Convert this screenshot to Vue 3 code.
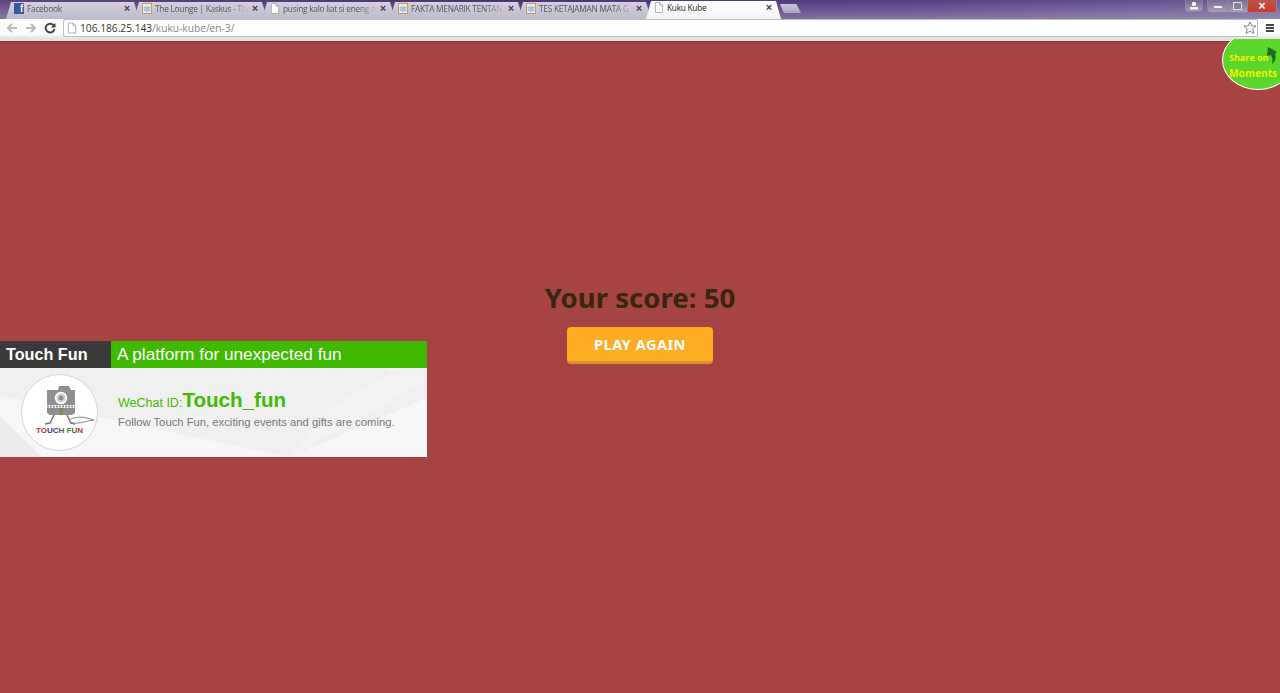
<script setup>
const tabs = [
  { title: "Facebook", icon: "fb" },
  { title: "The Lounge | Kaskus - The", icon: "web" },
  { title: "pusing kalo liat si eneng n", icon: "doc" },
  { title: "FAKTA MENARIK TENTAN", icon: "web" },
  { title: "TES KETAJAMAN MATA G", icon: "web" },
  { title: "Kuku Kube", icon: "doc", active: true },
];
</script>

<template>
  <div class="window">
    <!-- tab strip -->
    <div class="tabstrip">
      <div
        v-for="tab in tabs"
        :key="tab.title"
        :class="['tab', { active: tab.active }]"
      >
        <span v-if="tab.icon === 'fb'" class="favicon fb">f</span>
        <span v-else-if="tab.icon === 'web'" class="favicon web">
          <svg width="10" height="10" viewBox="0 0 10 10">
            <path d="M1 3h3M6 3h3M1 5h8M1 7h3M6 7h3M5 1v8" stroke="#7b9cc4" stroke-width="1" fill="none" />
          </svg>
        </span>
        <svg v-else class="favicon" width="11" height="12" viewBox="0 0 11 12">
          <path d="M1.5.5h5l3 3v8h-8z" fill="#fff" stroke="#a9a9b0" />
          <path d="M6.5.5v3h3" fill="none" stroke="#a9a9b0" />
        </svg>
        <span class="tab-title">{{ tab.title }}</span>
        <span class="tab-close">×</span>
      </div>
      <div class="new-tab"></div>
      <div class="window-controls">
        <div class="user-btn">
          <svg width="10" height="9" viewBox="0 0 10 9">
            <circle cx="5" cy="3" r="2.2" fill="#f4f4f6" />
            <rect x="1" y="6" width="8" height="2.4" fill="#f4f4f6" />
          </svg>
        </div>
        <div class="caption">
          <div class="cap-btn"><span class="min-bar"></span></div>
          <div class="cap-btn"><span class="max-box"></span></div>
          <div class="cap-btn close">×</div>
        </div>
      </div>
    </div>

    <!-- toolbar -->
    <div class="toolbar">
      <div class="nav">
        <svg width="12" height="10" viewBox="0 0 12 10">
          <path d="M11 5H3M6 1 2 5l4 4" fill="none" stroke="#b9b9b9" stroke-width="2" />
        </svg>
        <svg width="12" height="10" viewBox="0 0 12 10">
          <path d="M1 5h8M6 1l4 4-4 4" fill="none" stroke="#b9b9b9" stroke-width="2" />
        </svg>
        <svg width="12" height="12" viewBox="0 0 12 12">
          <path d="M10 4a4.4 4.4 0 1 0 .4 3" fill="none" stroke="#444" stroke-width="2" />
          <path d="M11.5 1v4.5H7z" fill="#444" />
        </svg>
      </div>
      <div class="omnibox">
        <svg width="10" height="12" viewBox="0 0 11 12">
          <path d="M1.5.5h5l3 3v8h-8z" fill="#fff" stroke="#a9a9b0" />
          <path d="M6.5.5v3h3" fill="none" stroke="#a9a9b0" />
        </svg>
        <span class="url"><b>106.186.25.143</b>/kuku-kube/en-3/</span>
        <svg class="star" width="14" height="14" viewBox="0 0 14 14">
          <path d="M7 1l1.800 4h4.200l-3.300 2.900 1.100 4.600L7 10.100 3.200 12.500l1.100-4.600L1 5h4.200z" fill="#fff" stroke="#888" />
        </svg>
      </div>
      <div class="menu"><span></span><span></span><span></span></div>
    </div>

    <!-- page -->
    <div class="page">
      <div class="banner">
        <div class="banner-head">
          <div class="brand">Touch Fun</div>
          <div class="slogan">A platform for unexpected fun</div>
        </div>
        <div class="banner-body">
          <svg class="banner-bg" width="427" height="89" viewBox="0 0 427 89">
            <polygon points="0,0 110,0 380,0 427,8 427,30 290,89 150,60 0,28" fill="#f0f0f0" />
            <polygon points="330,40 400,0 427,0 427,12 290,89" fill="#f3f3f3" />
            <polygon points="0,48 42,89 0,89" fill="#ededed" />
          </svg>
          <div class="logo">
            <svg width="72" height="41" viewBox="0 0 72 41">
              <path d="M23 5h11l1-4h10l2 4h4v15H23z" fill="#8f8f8f" />
              <circle cx="37" cy="13" r="5.500" fill="#d4d4d4" stroke="#fff" stroke-width="1.500" />
              <circle cx="37" cy="13" r="2.500" fill="#8f8f8f" />
              <path d="M23 21.500h28" stroke="#8f8f8f" stroke-width="2" stroke-dasharray="2 1" />
              <path d="M23 23h28v5l-3 2H26l-3-2z" fill="#8f8f8f" />
              <rect x="36" y="23" width="1.500" height="7" fill="#c8503c" />
              <rect x="37.500" y="23" width="1.500" height="7" fill="#58a83c" />
              <path d="M30 30l-4 8-5 1M43 30l4 8 4 1" fill="none" stroke="#777" stroke-width="1.500" />
              <path d="M47 34c7-3 13-2 23 1-8 1-15 4-21 3-3-1-4-3-2-4z" fill="#fff" stroke="#888" />
            </svg>
            <div class="logo-name">
              <span style="color: #b5353a">TO</span><span style="color: #3a3a80">UC</span><span style="color: #555">H </span><span style="color: #3c9a3c">F</span><span style="color: #555">U</span><span style="color: #b5353a">N</span>
            </div>
          </div>
          <div class="banner-text">
            <div class="wechat">WeChat ID:<span class="wechat-id">Touch_fun</span></div>
            <div class="follow">Follow Touch Fun, exciting events and gifts are coming.</div>
          </div>
        </div>
      </div>

      <div class="result">
        <h1 class="score">Your score: 50</h1>
        <div class="again">PLAY AGAIN</div>
      </div>

      <div class="share">
        <div class="share-on">Share on</div>
        <div class="moments">Moments</div>
        <svg class="share-arrow" width="12" height="19" viewBox="0 0 12 19">
          <path d="M2 1l9 5-2 2c1.500 4 0 8-3 10 1-4 .5-7-1.500-9L1 10z" fill="#1f6b1a" />
        </svg>
      </div>
    </div>
  </div>
</template>

<style scoped>
.window {
  width: 1280px;
  height: 693px;
  display: flex;
  flex-direction: column;
  overflow: hidden;
  font-family: "Open Sans", "Liberation Sans", sans-serif;
}

.tabstrip {
  height: 19px;
  flex: none;
  display: flex;
  align-items: flex-end;
  padding-left: 6px;
  background:
    linear-gradient(rgba(255, 255, 255, 0), rgba(255, 255, 255, 0.28)),
    linear-gradient(90deg, #5c4380 0%, #4a3272 40%, #553c80 70%, #6f5a94 100%);
}

.tab {
  width: 133px;
  height: 17px;
  margin-right: -5px;
  padding: 0 9px 4px 8px;
  box-sizing: border-box;
  display: flex;
  align-items: center;
  gap: 3px;
  background: linear-gradient(#d3d0e0, #bdbaca);
  clip-path: polygon(0 100%, 5px 0, calc(100% - 5px) 0, 100% 100%);
  font-size: 8.300px;
  letter-spacing: -0.25px;
  color: #555;
}

.tab.active {
  width: 135px;
  height: 18px;
  padding-bottom: 5px;
  background: linear-gradient(#fff, #f4f4f4);
  color: #222;
}

.favicon {
  flex: none;
  width: 10px;
  height: 11px;
}

.fb {
  background: #3b5998;
  color: #fff;
  font: bold 10px/12px "Liberation Sans", sans-serif;
  text-align: right;
  padding-right: 1px;
  box-sizing: border-box;
}

.web {
  background: #e9edf4;
  border: 1px solid #d9905a;
  box-sizing: border-box;
  display: flex;
  align-items: center;
  justify-content: center;
}

.web svg {
  width: 8px;
  height: 8px;
}

.tab-title {
  flex: 1;
  overflow: hidden;
  white-space: nowrap;
  -webkit-mask-image: linear-gradient(90deg, #000 80%, transparent);
  mask-image: linear-gradient(90deg, #000 80%, transparent);
}

.tab.active .tab-title {
  -webkit-mask-image: none;
  mask-image: none;
}

.tab-close {
  flex: none;
  font: bold 11px/11px "Liberation Sans", sans-serif;
  color: #444;
}

.new-tab {
  width: 21px;
  height: 9px;
  margin: 0 0 6px 4px;
  background: linear-gradient(#c8c4d8, #aba6c0);
  clip-path: polygon(0 0, 78% 0, 100% 100%, 18% 100%);
}

.window-controls {
  margin-left: auto;
  align-self: flex-start;
  display: flex;
  gap: 4px;
  padding-right: 3px;
}

.user-btn {
  width: 18px;
  height: 12px;
  box-sizing: border-box;
  border: 1px solid #8d82a5;
  border-top: 0;
  border-radius: 0 0 3px 3px;
  background: linear-gradient(#74658f, #a59cb8);
  display: flex;
  align-items: center;
  justify-content: center;
}

.caption {
  display: flex;
  height: 12px;
  border: 1px solid #8d82a5;
  border-top: 0;
  border-radius: 0 0 3px 3px;
  overflow: hidden;
}

.cap-btn {
  width: 19px;
  background: linear-gradient(#7a6c93, #a8a0b8);
  border-right: 1px solid #8d82a5;
  display: flex;
  align-items: center;
  justify-content: center;
}

.cap-btn.close {
  width: 28px;
  border-right: 0;
  background: linear-gradient(#b9574a, #c9392a);
  color: #fff;
  font: bold 12px/12px "Liberation Sans", sans-serif;
}

.min-bar {
  width: 8px;
  height: 2px;
  margin-top: 2px;
  background: #f1f1f1;
}

.max-box {
  width: 7px;
  height: 6px;
  border: 1px solid #ddd;
  background: #8a7ea3;
}

.toolbar {
  height: 22px;
  flex: none;
  display: flex;
  align-items: center;
  padding: 0 5px 4px 6px;
  box-sizing: border-box;
  background: linear-gradient(#fcfcfc 70%, #e6e6e6 85%, #e2e2e2);
}

.nav {
  width: 56px;
  flex: none;
  display: flex;
  align-items: center;
  gap: 7px;
}

.omnibox {
  width: 1195px;
  height: 18px;
  box-sizing: border-box;
  flex: none;
  margin-left: 1px;
  padding: 0 0 0 3px;
  display: flex;
  align-items: center;
  gap: 3px;
  background: #fff;
  border: 1px solid #bdbdbd;
  border-radius: 2px;
}

.url {
  flex: 1;
  font-size: 10.200px;
  color: #888;
}

.url b {
  font-weight: 400;
  color: #333;
}

.menu {
  margin-left: 8px;
  display: flex;
  flex-direction: column;
  gap: 1px;
}

.menu span {
  width: 8px;
  height: 2px;
  background: #444;
}

.page {
  flex: 1;
  position: relative;
  display: grid;
  grid-template-columns: 1fr auto 1fr;
  align-items: start;
  background: #a64444;
  box-shadow: inset 0 1px 0 #8a3232;
}

.banner {
  width: 427px;
  margin-top: 300px;
}

.banner-head {
  height: 27px;
  display: flex;
  font-family: "Liberation Sans", sans-serif;
}

.brand {
  width: 111px;
  box-sizing: border-box;
  padding-left: 6px;
  background: #3a3a3a;
  color: #fff;
  font-weight: 700;
  font-size: 16.200px;
  line-height: 27px;
}

.slogan {
  flex: 1;
  padding-left: 6px;
  background: #3fba00;
  color: #fff;
  font-size: 17.200px;
  line-height: 26px;
}

.banner-body {
  position: relative;
  height: 89px;
  display: flex;
  align-items: center;
  padding-left: 21px;
  box-sizing: border-box;
  background: #f7f7f7;
  font-family: "Liberation Sans", sans-serif;
}

.banner-bg {
  position: absolute;
  top: 0;
  left: 0;
}

.logo {
  position: relative;
  width: 77px;
  height: 77px;
  flex: none;
  box-sizing: border-box;
  border: 1px solid #d6d6d6;
  border-radius: 50%;
  background: #fff;
  display: flex;
  flex-direction: column;
  align-items: center;
  padding-top: 10px;
}

.logo-name {
  font-size: 8px;
  line-height: 10px;
  font-weight: 700;
  white-space: nowrap;
}

.banner-text {
  position: relative;
  margin-left: 20px;
  padding-bottom: 9px;
}

.wechat {
  color: #3fba00;
  font-size: 12.500px;
  line-height: 24px;
}

.wechat-id {
  font-size: 20.600px;
  font-weight: 700;
}

.follow {
  color: #777;
  font-size: 11.270px;
  line-height: 14px;
}

.result {
  grid-column: 2;
  margin-top: 238px;
  display: flex;
  flex-direction: column;
  align-items: center;
}

.score {
  margin: 0;
  color: #3a2412;
  font-size: 27.600px;
  line-height: 36px;
  font-weight: 700;
  white-space: nowrap;
  font-family: "Noto Sans", sans-serif;
}

.again {
  width: 146px;
  height: 37px;
  margin-top: 12px;
  box-sizing: border-box;
  padding-bottom: 3px;
  text-align: center;
  line-height: 34px;
  background: #ffac25;
  border-bottom: 3px solid #dc9327;
  border-radius: 4px;
  color: #fff;
  font-size: 14.500px;
  font-weight: 700;
  letter-spacing: 0.5px;
  font-family: "Noto Sans", sans-serif;
}

.share {
  position: absolute;
  top: -11px;
  left: 1222px;
  width: 72px;
  height: 60px;
  box-sizing: border-box;
  border: 1px solid #fff;
  border-radius: 50%;
  background: #5ad62e;
  color: #f2f200;
  font-weight: 700;
  padding: 20px 0 0 6px;
  white-space: nowrap;
  clip-path: inset(9px 0 0 0);
}

.share-on {
  font-size: 9px;
  line-height: 13px;
}

.moments {
  font-size: 10.200px;
  line-height: 18px;
}

.share-arrow {
  position: absolute;
  left: 43px;
  top: 15px;
}
</style>

<style>
html,
body {
  margin: 0;
  overflow: hidden;
}
</style>
